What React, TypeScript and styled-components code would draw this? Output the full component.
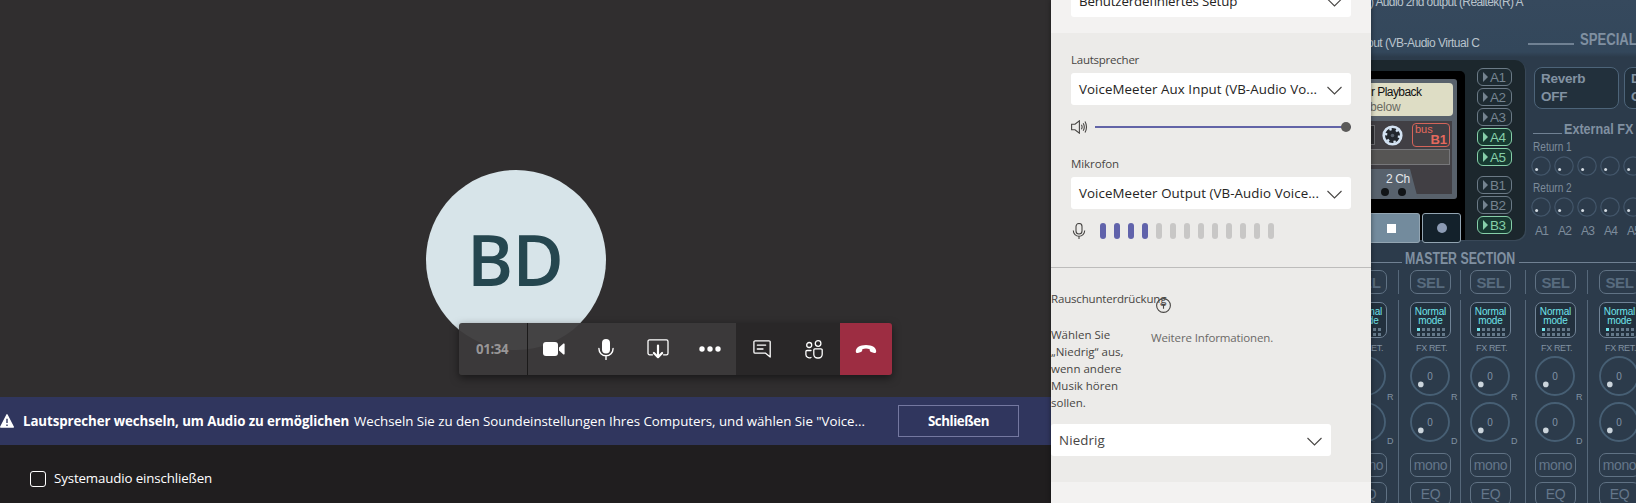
import React from 'react';
import styled, { createGlobalStyle, css } from 'styled-components';

const GlobalStyle = createGlobalStyle`
  * { box-sizing: border-box; }
  body { margin: 0; background: #2c3b4b; overflow: hidden; }
`;

const ui = '"Open Sans", "Noto Sans", sans-serif';
const skin = '"Liberation Sans", Arial, sans-serif';

const Desktop = styled.div`
  display: flex;
  width: 1636px;
  height: 503px;
  overflow: hidden;
  font-family: ${ui};
`;

/* ---------- Meeting ---------- */

const Meeting = styled.main`
  display: flex;
  flex-direction: column;
  width: 1051px;
  height: 503px;
  color: #fff;
`;

const Stage = styled.section`
  position: relative;
  height: 397px;
  padding: 170px 0 0 426px;
  background: #302e2f;
`;

const Avatar = styled.div`
  width: 180px;
  height: 180px;
  border-radius: 50%;
  background: #d7e4e9;
  color: #25464f;
  font-size: 70px;
  font-weight: 600;
  line-height: 178px;
  padding-left: 41px;
  letter-spacing: -0.6px;
`;

const Toolbar = styled.div`
  position: absolute;
  left: 459px;
  top: 323px;
  display: flex;
  width: 433px;
  height: 52px;
  border-radius: 3px;
  overflow: hidden;
  box-shadow: 0 3px 9px rgba(0, 0, 0, 0.5);
`;

const Timer = styled.div`
  width: 69px;
  background: rgba(60, 58, 59, 0.95);
  border-right: 1px solid #1b1a1a;
  padding-left: 17px;
  color: #989697;
  font-size: 13.3px;
  font-weight: 700;
  line-height: 52px;
  letter-spacing: -0.4px;
`;

const ToolGroup = styled.div<{ $dark?: boolean }>`
  display: flex;
  background: ${(p) => (p.$dark ? '#292728' : 'rgba(60, 58, 59, 0.95)')};
`;

const ToolButton = styled.button<{ $hangup?: boolean }>`
  display: flex;
  align-items: center;
  justify-content: center;
  width: 52px;
  height: 52px;
  padding: 0;
  border: 0;
  color: #fff;
  background: ${(p) => (p.$hangup ? '#9d2d42' : 'transparent')};
`;

const Banner = styled.div`
  display: flex;
  align-items: center;
  height: 48px;
  background: #30365e;
  font-size: 13.3px;
  line-height: 20px;
  white-space: nowrap;
`;

const WarningIcon = styled.svg`
  width: 14px;
  height: 14px;
  margin: 0 9px 0 0;
`;

const BannerTitle = styled.strong`
  width: 331px;
  font-weight: 700;
  letter-spacing: -0.09px;
`;

const BannerText = styled.span`
  width: 544px;
  letter-spacing: -0.03px;
`;

const CloseButton = styled.button`
  width: 121px;
  height: 32px;
  padding: 0;
  border: 1px solid #7478a0;
  background: transparent;
  color: #fff;
  font: 700 13.3px ${ui};
  letter-spacing: -0.43px;
`;

const Footer = styled.footer`
  display: flex;
  align-items: flex-start;
  height: 58px;
  padding: 26px 0 0 30px;
  background: #201e1f;
  font-size: 13.3px;
  line-height: 14px;
  letter-spacing: -0.13px;
`;

const Checkbox = styled.span`
  width: 16px;
  height: 16px;
  margin-right: 8px;
  border: 1px solid #fff;
  border-radius: 3px;
`;

/* ---------- Settings panel ---------- */

const Panel = styled.aside`
  position: relative;
  z-index: 1;
  width: 320px;
  height: 503px;
  background: #f3f2f1;
  color: #252423;
  box-shadow: 0 0 5px rgba(0, 0, 0, 0.45);
`;

const SetupArea = styled.div`
  height: 33px;
  padding: 0 20px;
  overflow: hidden;
`;

const DeviceArea = styled.section`
  height: 235px;
  padding: 19px 20px 0;
  background: #ecebe9;
  border-bottom: 1px solid #bdbcbb;
`;

const Label = styled.div<{ $top?: number; $ls?: number }>`
  height: 21px;
  margin-top: ${(p) => p.$top ?? 0}px;
  font-size: 11.5px;
  line-height: 16px;
  letter-spacing: ${(p) => p.$ls ?? 0}px;
  color: #484644;
`;

const Select = styled.div<{ $lift?: boolean; $ls?: number }>`
  display: flex;
  justify-content: space-between;
  width: 280px;
  height: 32px;
  margin-top: ${(p) => (p.$lift ? -15 : 0)}px;
  padding: 1px 9px 0 8px;
  border-radius: 3px;
  background: #fff;
  font-size: 13.3px;
  line-height: 31px;
  letter-spacing: ${(p) => p.$ls ?? 0}px;
  white-space: nowrap;
`;

const Chevron = styled.svg`
  width: 15px;
  height: 9px;
  margin-top: 12px;
`;

const VolumeRow = styled.div`
  display: flex;
  align-items: center;
  height: 16px;
  margin-top: 14px;
`;

const Slider = styled.div`
  display: flex;
  align-items: center;
  justify-content: flex-end;
  width: 256px;
  height: 2px;
  margin-left: 7px;
  background: #6264a7;
`;

const Thumb = styled.span`
  width: 10px;
  height: 10px;
  border-radius: 50%;
  background: #5b5a59;
`;

const LevelRow = styled.div`
  display: flex;
  gap: 8px;
  height: 16px;
  margin-top: 14px;
`;

const LevelBar = styled.span<{ $on: boolean }>`
  width: 6px;
  height: 16px;
  border-radius: 3px;
  background: ${(p) => (p.$on ? '#6163ab' : '#c8c7c6')};
`;

const NoiseArea = styled.section`
  height: 214px;
  padding-top: 23px;
  background: #ecebe9;
  font-size: 11.5px;
  line-height: 17px;
  color: #484644;
`;

const NoiseHead = styled.div`
  display: flex;
  height: 35px;
  line-height: 16px;
`;

const NoiseTitle = styled.span`
  width: 105px;
  white-space: nowrap;
  letter-spacing: -0.18px;
`;

const HelpIcon = styled.svg`
  flex: none;
  width: 15px;
  height: 15px;
  margin-top: 7px;
`;

const NoiseInfo = styled.div`
  display: flex;
  height: 98px;
`;

const Hint = styled.p`
  width: 80px;
  margin: 0 20px 0 0;
`;

const MoreLink = styled.span`
  margin-top: 3px;
  color: #6b6967;
  letter-spacing: -0.13px;
`;

/* ---------- Mixer ---------- */

const Mixer = styled.section`
  width: 265px;
  height: 503px;
  overflow: hidden;
  background: #2c3b4b;
  font-family: ${skin};
  white-space: nowrap;
`;

const MixerHead = styled.header`
  display: flex;
  height: 60px;
  background: linear-gradient(#36495d 0, #33475b 52px, #2c3b4b 57px);
`;

const Devices = styled.div`
  flex: none;
  width: 157px;
  margin-top: -5px;
  color: #b9c3cc;
  font-size: 12px;
  line-height: 14px;
`;

const Device = styled.div<{ $ls: number; $x: number; $gap?: number }>`
  margin: 0 0 ${(p) => p.$gap ?? 0}px ${(p) => p.$x}px;
  letter-spacing: ${(p) => p.$ls}px;
`;

const Heading = styled.h2<{ $w: number; $sx: number; $size: number }>`
  flex: none;
  width: ${(p) => p.$w}px;
  margin: 0;
  color: #8090a1;
  font-size: ${(p) => p.$size}px;
  line-height: 16px;
  transform: scaleX(${(p) => p.$sx});
  transform-origin: left;
`;

const SpecialTitle = styled.div`
  display: flex;
  flex: none;
  padding-top: 32px;
`;

const Rule = styled.span<{ $w: number; $top: number; $gap?: number; $thick?: number }>`
  flex: none;
  width: ${(p) => p.$w}px;
  height: ${(p) => p.$thick ?? 1}px;
  margin: ${(p) => p.$top}px ${(p) => p.$gap ?? 0}px 0 0;
  background: #708193;
`;

const Upper = styled.div`
  display: flex;
  height: 180px;
`;

const Deck = styled.div`
  display: flex;
  flex: none;
  width: 154px;
  border-radius: 0 10px 10px 0;
  background: #1c272d;
  box-shadow: 1px 1px 1px #3b4b5a;
`;

const Tape = styled.div`
  width: 94px;
  height: 169px;
  margin-top: 11px;
  padding-top: 8px;
  background: #000;
  border-radius: 0 5px 0 0;
`;

const TapeBody = styled.div`
  width: 86px;
  height: 120px;
  padding: 4px 4px 0 0;
  border-radius: 0 3px 3px 0;
  background: #58616b;
`;

const Display = styled.div`
  height: 33px;
  padding-top: 2px;
  border-radius: 0 4px 4px 0;
  background: #deddc5;
  color: #111;
  font-size: 12px;
  line-height: 15px;
  letter-spacing: -0.55px;
`;

const DisplayNote = styled.div`
  color: #6b6b62;
  margin-left: -1px;
  letter-spacing: -0.2px;
`;

const TapeFace = styled.div`
  width: 81px;
  height: 73px;
  margin-top: 5px;
  background: #413f44;
`;

const ReelRow = styled.div`
  display: flex;
  align-items: center;
  height: 28px;
  padding-right: 2px;
`;

const TapeWindow = styled.span`
  width: 4px;
  height: 20px;
  border: 1px solid #6c6c70;
  border-left: 0;
  background: #2c2c30;
`;

const Reel = styled.svg`
  width: 21px;
  height: 21px;
  margin: 0 9px 0 7px;
`;

const BusBadge = styled.div`
  width: 38px;
  height: 24px;
  padding: 1px 2px 0 2px;
  border: 1px solid #d4645a;
  border-radius: 4px;
  color: #e5695d;
  font-size: 11px;
  line-height: 9px;
`;

const BusName = styled.div`
  text-align: right;
  font-size: 13px;
  font-weight: 700;
  line-height: 11px;
`;

const TapeStrip = styled.div`
  width: 79px;
  height: 16px;
  border: 1px solid #77777a;
  border-left: 0;
  background: #565554;
`;

const TapeTab = styled.div`
  width: 48px;
  height: 30px;
  margin-top: 4px;
  padding-left: 15px;
  background: #58626d;
  clip-path: polygon(0 0, 39px 0, 47px 100%, 0 100%);
  color: #e4e7ea;
  font-size: 12px;
  line-height: 20px;
  letter-spacing: -0.4px;
`;

const TabHoles = styled.div`
  display: flex;
  gap: 9px;
  margin: -1px 0 0 -5px;
`;

const Hole = styled.span`
  width: 8px;
  height: 8px;
  border-radius: 50%;
  background: #111417;
`;

const Transport = styled.div`
  display: flex;
  gap: 2px;
  margin-top: 14px;
`;

const TransportButton = styled.div<{ $active?: boolean }>`
  display: flex;
  align-items: center;
  justify-content: center;
  width: ${(p) => (p.$active ? 49 : 39)}px;
  height: 30px;
  padding-right: ${(p) => (p.$active ? 7 : 0)}px;
  border: 1px solid #93a5b2;
  border-left-width: ${(p) => (p.$active ? 0 : 1)}px;
  border-radius: ${(p) => (p.$active ? '0 3px 3px 0' : '3px')};
  background: ${(p) => (p.$active ? '#738b9d' : '#13212b')};
`;

const StopMark = styled.span`
  width: 9px;
  height: 9px;
  background: #fff;
`;

const RecordMark = styled.span`
  width: 10px;
  height: 10px;
  border-radius: 50%;
  background: #8c9bb4;
`;

const Routing = styled.div`
  display: flex;
  flex-direction: column;
  gap: 2px;
  padding: 8px 0 0 12px;
`;

const RouteButton = styled.div<{ $on: boolean; $spaced: boolean }>`
  display: flex;
  align-items: center;
  gap: 2px;
  width: 35px;
  height: 18px;
  margin-top: ${(p) => (p.$spaced ? 8 : 0)}px;
  padding-left: 5px;
  border: 1px solid ${(p) => (p.$on ? '#86cfa9' : '#6b7a86')};
  border-radius: 6px;
  background: ${(p) => (p.$on ? '#173a31' : '#1e2b32')};
  color: ${(p) => (p.$on ? '#86cfa9' : '#758490')};
  font-size: 13.5px;
  line-height: 19px;
  padding-top: 1px;
  letter-spacing: -0.6px;
`;

const Arrow = styled.span`
  width: 0;
  margin-top: -1px;
  border: solid transparent;
  border-width: 5px 0 5px 5px;
  border-left-color: currentColor;
`;

const Effects = styled.div`
  padding: 7px 0 0 8px;
  color: #7d8c9c;
`;

const EffectRow = styled.div`
  display: flex;
  gap: 5px;
  margin-left: 1px;
`;

const EffectButton = styled.div`
  flex: none;
  width: 85px;
  height: 42px;
  padding: 2px 0 0 6px;
  border: 1px solid #4d6479;
  border-radius: 8px;
  background: #22303c;
  color: #8292a2;
  font-size: 13.5px;
  font-weight: 700;
  line-height: 18px;
  letter-spacing: -0.25px;
`;

const ExternalTitle = styled.div`
  display: flex;
  height: 16px;
  margin-top: 12px;
`;

const ReturnLabel = styled.div<{ $top: number }>`
  height: 14px;
  margin-top: ${(p) => p.$top}px;
  font-size: 12px;
  line-height: 14px;
  transform: scaleX(0.84);
  transform-origin: left;
`;

const ReturnKnobs = styled.div`
  display: flex;
  gap: 3px;
  margin: 2px 0 0 -2px;
  height: 20px;
`;

const SmallKnob = styled.svg`
  flex: none;
  width: 20px;
  height: 20px;
`;

const ReturnNames = styled.div`
  display: flex;
  gap: 9px;
  margin: 7px 0 0 2px;
  font-size: 12px;
  line-height: 14px;
  letter-spacing: -0.7px;
`;

const ReturnName = styled.span`
  flex: none;
  width: 14px;
`;

const MasterTitle = styled.div`
  display: flex;
  height: 19px;
  margin-top: 11px;
`;

const Strips = styled.div`
  display: grid;
  grid-template-columns: 27px 62px 65px 62px 62px;
  height: 254px;
`;

const Strip = styled.div<{ $inset: number }>`
  display: flex;
  flex-direction: column;
  min-width: 0;
  --inset: ${(p) => p.$inset}px;
`;

const channelEdge = css`
  border-left: 1px solid #56687a;
  padding-left: var(--inset);
`;

const StripTop = styled.div`
  ${channelEdge}
  height: 24px;
  margin-bottom: 6px;
`;

const StripBody = styled.div`
  ${channelEdge}
  height: 230px;
  padding-top: 2px;
`;

/* The leftmost channel slides under the settings panel. */
const HiddenEdgeStrip = styled.div`
  margin-left: -37px;
`;

const PadButton = styled.div<{ $bold?: boolean; $gap?: number }>`
  display: flex;
  justify-content: center;
  width: 41px;
  height: 24px;
  margin-bottom: ${(p) => p.$gap ?? 0}px;
  border: 1px solid #607284;
  border-radius: 7px;
  color: ${(p) => (p.$bold ? '#586b7e' : '#64768a')};
  font-size: ${(p) => (p.$bold ? 15 : 14)}px;
  font-weight: ${(p) => (p.$bold ? 700 : 400)};
  line-height: ${(p) => (p.$bold ? 24 : 23)}px;
  letter-spacing: -0.4px;
`;

const ModeButton = styled.div`
  display: flex;
  flex-direction: column;
  align-items: center;
  width: 41px;
  height: 36px;
  padding-top: 4px;
  border: 1px solid #708396;
  border-radius: 7px;
  background: #22303d;
  color: #6fe3ea;
  font-size: 10px;
  line-height: 9px;
  text-align: center;
  letter-spacing: -0.15px;
`;

const ModeDots = styled.div`
  display: grid;
  grid-template-columns: repeat(6, 3px);
  gap: 2px;
  margin-top: 3px;
`;

const ModeDot = styled.span<{ $on: boolean }>`
  width: 3px;
  height: 3px;
  background: ${(p) => (p.$on ? '#6fe3ea' : '#64798a')};
`;

const FxLabel = styled.div`
  height: 18px;
  margin-left: 6px;
  padding-top: 4px;
  color: #8192a2;
  font-size: 9px;
  line-height: 12px;
  letter-spacing: -0.35px;
`;

const KnobRow = styled.div<{ $gap: number }>`
  display: flex;
  align-items: flex-end;
  width: 50px;
  height: 40px;
  margin-bottom: ${(p) => p.$gap}px;
  color: #8192a2;
  font-size: 9px;
  line-height: 9px;
`;

const Knob = styled.svg`
  flex: none;
  width: 40px;
  height: 40px;
  margin-right: 1px;
`;

const KnobTag = styled.span<{ $drop: number }>`
  margin-bottom: ${(p) => -p.$drop}px;
`;

/* ---------- Pieces ---------- */

const stroke = { fill: 'none', stroke: 'currentColor', strokeWidth: 1.4, strokeLinecap: 'round', strokeLinejoin: 'round' } as const;

function Dropdown({ text, lift, ls }: { text: string; lift?: boolean; ls?: number }) {
  return (
    <Select $lift={lift} $ls={ls}>
      <span>{text}</span>
      <Chevron viewBox="0 0 15 9">
        <path d="M0.5 1 7.5 8 14.5 1" fill="none" stroke="#484644" strokeWidth="1.1" />
      </Chevron>
    </Select>
  );
}

function Dial({ tag, gap, drop }: { tag: string; gap: number; drop: number }) {
  return (
    <KnobRow $gap={gap}>
      <Knob viewBox="0 0 40 40">
        <circle cx="20" cy="20" r="19" fill="none" stroke="#475f74" strokeWidth="1.9" />
        <text x="20" y="24" textAnchor="middle" fontSize="10" fill="#8193a5">0</text>
        <circle cx="10.8" cy="28.4" r="2.8" fill="#ccd5dc" />
      </Knob>
      <KnobTag $drop={drop}>{tag}</KnobTag>
    </KnobRow>
  );
}

function ChannelStrip({ inset }: { inset: number }) {
  return (
    <Strip $inset={inset}>
      <StripTop>
        <PadButton $bold>SEL</PadButton>
      </StripTop>
      <StripBody>
        <ModeButton>
          <span>Normal</span>
          <span>mode</span>
          <ModeDots>
            {Array.from({ length: 12 }, (_, i) => <ModeDot key={i} $on={i === 0} />)}
          </ModeDots>
        </ModeButton>
        <FxLabel>FX RET.</FxLabel>
        <Dial tag="R" gap={6} drop={6} />
        <Dial tag="D" gap={11} drop={4} />
        <PadButton $gap={5}>mono</PadButton>
        <PadButton>EQ</PadButton>
      </StripBody>
    </Strip>
  );
}

function KnobLine() {
  return (
    <ReturnKnobs>
      {[0, 1, 2, 3, 4].map((i) => (
        <SmallKnob key={i} viewBox="0 0 20 20">
          <circle cx="10" cy="10" r="9.2" fill="none" stroke="#43566a" strokeWidth="1.2" />
          <circle cx="5.6" cy="13.6" r="1.5" fill="#d3dbe2" />
        </SmallKnob>
      ))}
    </ReturnKnobs>
  );
}

const routes = ['A1', 'A2', 'A3', 'A4', 'A5', 'B1', 'B2', 'B3'];
const activeRoutes = ['A4', 'A5', 'B3'];

export default function App() {
  return (
    <Desktop>
      <GlobalStyle />
      <Meeting>
        <Stage>
          <Avatar>BD</Avatar>
          <Toolbar>
            <Timer>01:34</Timer>
            <ToolGroup>
              <ToolButton aria-label="Kamera">
                <svg width="22" height="14" viewBox="0 0 22 14" fill="currentColor">
                  <rect x="0" y="0" width="15" height="14" rx="3" />
                  <path d="M16 5.4 20.4 1.6Q21.6 1 21.6 2.2V11.8Q21.6 13 20.4 12.4L16 8.6Z" />
                </svg>
              </ToolButton>
              <ToolButton aria-label="Mikrofon">
                <svg width="16" height="21" viewBox="0 0 16 21">
                  <rect x="4" y="0" width="8" height="14.5" rx="4" fill="currentColor" />
                  <path d="M0.9 9.5a7.1 7.3 0 0 0 14.2 0M8 17v3.6" {...stroke} />
                </svg>
              </ToolButton>
              <ToolButton aria-label="Teilen">
                <svg width="22" height="20" viewBox="0 0 22 20">
                  <path d="M5.5 15.8H2.6A1.6 1.6 0 0 1 1 14.2V2.4A1.6 1.6 0 0 1 2.6.8H19.4A1.6 1.6 0 0 1 21 2.4V14.2A1.6 1.6 0 0 1 19.4 15.8H16.5" {...stroke} strokeWidth="1.3" />
                  <path d="M11 6.5V17.8M6.9 14 11 18.2 15.1 14" {...stroke} strokeWidth="2.2" />
                </svg>
              </ToolButton>
              <ToolButton aria-label="Mehr">
                <svg width="22" height="6" viewBox="0 0 22 6" fill="currentColor">
                  <circle cx="3" cy="3" r="2.7" /><circle cx="11" cy="3" r="2.7" /><circle cx="19" cy="3" r="2.7" />
                </svg>
              </ToolButton>
            </ToolGroup>
            <ToolGroup $dark>
              <ToolButton aria-label="Chat">
                <svg width="18" height="18" viewBox="0 0 18 18">
                  <path d="M2.2.8H16A1.2 1.2 0 0 1 17.2 2V17L12.6 13.2H2.2A1.3 1.3 0 0 1 .9 11.9V2A1.2 1.2 0 0 1 2.2.8ZM4.3 5.1H12.7M4.3 9H10" {...stroke} strokeWidth="1.3" />
                </svg>
              </ToolButton>
              <ToolButton aria-label="Teilnehmer">
                <svg width="18" height="19" viewBox="0 0 18 19">
                  <g {...stroke} strokeWidth="1.3">
                    <circle cx="4.2" cy="5" r="2.5" /><circle cx="13.1" cy="3.5" r="2.8" />
                    <path d="M6 10.5H1.9A1 1 0 0 0 .9 11.5V14.2A3.5 3.5 0 0 0 6 17.5M9.8 8.9H16A1.2 1.2 0 0 1 17.2 10.1V14.3A3.7 3.7 0 0 1 13.5 18H12.5A3.7 3.7 0 0 1 8.8 14.3V9.9A1 1 0 0 1 9.8 8.9Z" />
                  </g>
                </svg>
              </ToolButton>
            </ToolGroup>
            <ToolButton $hangup aria-label="Auflegen">
              <svg width="22" height="10" viewBox="0 0 22 10" fill="currentColor">
                <path d="M11 .9C17.2.9 21.5 3.7 21.2 7.4 21 9.2 19.7 9.2 18.4 8.8L16.1 8C14.8 7.5 14.8 6.7 14.7 5.2 12.5 4.3 9.5 4.3 7.3 5.2 7.2 6.7 7.2 7.5 5.9 8L3.6 8.8C2.3 9.2 1 9.2.8 7.4.5 3.7 4.8.9 11 .9Z" />
              </svg>
            </ToolButton>
          </Toolbar>
        </Stage>
        <Banner>
          <WarningIcon viewBox="0 0 14 14">
            <path d="M7 .8 13.3 13H.7Z" fill="#fff" stroke="#fff" strokeWidth="1.4" strokeLinejoin="round" />
            <path d="M7 4.8V9M7 10.6V12" stroke="#30365e" strokeWidth="1.4" />
          </WarningIcon>
          <BannerTitle>Lautsprecher wechseln, um Audio zu ermöglichen</BannerTitle>
          <BannerText>Wechseln Sie zu den Soundeinstellungen Ihres Computers, und wählen Sie "Voice...</BannerText>
          <CloseButton>Schließen</CloseButton>
        </Banner>
        <Footer>
          <Checkbox />
          <span>Systemaudio einschließen</span>
        </Footer>
      </Meeting>

      <Panel>
        <SetupArea>
          <Dropdown lift text="Benutzerdefiniertes Setup" ls={-0.15} />
        </SetupArea>
        <DeviceArea>
          <Label $ls={-0.24}>Lautsprecher</Label>
          <Dropdown text="VoiceMeeter Aux Input (VB-Audio Vo..." ls={0.08} />
          <VolumeRow>
            <svg width="17" height="14" viewBox="0 0 17 14">
              <path d="M.6 4.2H4L8.4.8V13.2L4 9.8H.6ZM10.4 4.8Q11.8 7 10.4 9.2M12.2 3.2Q14.4 7 12.2 10.8M14 1.6Q17 7 14 12.4" fill="none" stroke="#484644" strokeWidth="1.1" />
            </svg>
            <Slider><Thumb /></Slider>
          </VolumeRow>
          <Label $top={21} $ls={-0.09}>Mikrofon</Label>
          <Dropdown text="VoiceMeeter Output (VB-Audio Voice..." ls={0.09} />
          <LevelRow>
            <svg width="21" height="16" viewBox="0 0 21 16">
              <path d="M5 3.5a3 3 0 0 1 6 0V8a3 3 0 0 1-6 0ZM2.3 7.5a5.7 5.7 0 0 0 11.4 0M8 13.2V16" fill="none" stroke="#484644" strokeWidth="1.1" />
            </svg>
            {Array.from({ length: 13 }, (_, i) => <LevelBar key={i} $on={i < 4} />)}
          </LevelRow>
        </DeviceArea>
        <NoiseArea>
          <NoiseHead>
            <NoiseTitle>Rauschunterdrückung</NoiseTitle>
            <HelpIcon viewBox="0 0 15 15">
              <circle cx="7.5" cy="7.5" r="6.9" fill="none" stroke="#484644" strokeWidth="1.1" />
              <path d="M5.4 6.4H9.2M7.5 6V10.8" fill="none" stroke="#484644" strokeWidth="1.1" />
            </HelpIcon>
          </NoiseHead>
          <NoiseInfo>
            <Hint>Wählen Sie „Niedrig“ aus, wenn andere Musik hören sollen.</Hint>
            <MoreLink>Weitere Informationen.</MoreLink>
          </NoiseInfo>
          <Dropdown text="Niedrig" ls={0.14} />
        </NoiseArea>
      </Panel>

      <Mixer>
        <MixerHead>
          <Devices>
            <Device $x={-1} $ls={-0.62} $gap={27}>) Audio 2nd output (Realtek(R) A</Device>
            <Device $x={-4} $ls={-0.5}>out (VB-Audio Virtual C</Device>
          </Devices>
          <SpecialTitle>
            <Rule $w={46} $top={11} $gap={6} $thick={2} />
            <Heading $w={80} $size={16} $sx={0.82}>SPECIAL</Heading>
          </SpecialTitle>
        </MixerHead>
        <Upper>
          <Deck>
            <Tape>
              <TapeBody>
                <Display>
                  r Playback
                  <DisplayNote>below</DisplayNote>
                </Display>
                <TapeFace>
                  <ReelRow>
                    <TapeWindow />
                    <Reel viewBox="0 0 21 21">
                      <circle cx="10.5" cy="10.5" r="8.8" fill="#22262c" stroke="#d3e2f2" strokeWidth="2.6" />
                      <circle cx="10.5" cy="10.5" r="6.6" fill="none" stroke="#d3e2f2" strokeWidth="2.4" strokeDasharray="2.4 4.51" />
                      <circle cx="10.5" cy="10.5" r="1.8" fill="#59616c" />
                    </Reel>
                    <BusBadge>
                      bus
                      <BusName>B1</BusName>
                    </BusBadge>
                  </ReelRow>
                  <TapeStrip />
                  <TapeTab>
                    2 Ch
                    <TabHoles><Hole /><Hole /></TabHoles>
                  </TapeTab>
                </TapeFace>
              </TapeBody>
              <Transport>
                <TransportButton $active><StopMark /></TransportButton>
                <TransportButton><RecordMark /></TransportButton>
              </Transport>
            </Tape>
            <Routing>
              {routes.map((name) => (
                <RouteButton key={name} $on={activeRoutes.includes(name)} $spaced={name === 'B1'}>
                  <Arrow />
                  {name}
                </RouteButton>
              ))}
            </Routing>
          </Deck>
          <Effects>
            <EffectRow>
              <EffectButton>Reverb<br />OFF</EffectButton>
              <EffectButton>Delay<br />OFF</EffectButton>
            </EffectRow>
            <ExternalTitle>
              <Rule $w={29} $top={12} $gap={2} />
              <Heading $w={90} $size={15} $sx={0.84}>External FX</Heading>
            </ExternalTitle>
            <ReturnLabel $top={3}>Return 1</ReturnLabel>
            <KnobLine />
            <ReturnLabel $top={5}>Return 2</ReturnLabel>
            <KnobLine />
            <ReturnNames>
              {routes.slice(0, 5).map((name) => <ReturnName key={name}>{name}</ReturnName>)}
            </ReturnNames>
          </Effects>
        </Upper>
        <MasterTitle>
          <Rule $w={31} $top={11} $gap={3} />
          <Heading $w={114} $size={16} $sx={0.77}>MASTER SECTION</Heading>
          <Rule $w={117} $top={11} />
        </MasterTitle>
        <Strips>
          <HiddenEdgeStrip>
            <ChannelStrip inset={11} />
          </HiddenEdgeStrip>
          <ChannelStrip inset={11} />
          <ChannelStrip inset={9} />
          <ChannelStrip inset={9} />
          <ChannelStrip inset={11} />
        </Strips>
      </Mixer>
    </Desktop>
  );
}
